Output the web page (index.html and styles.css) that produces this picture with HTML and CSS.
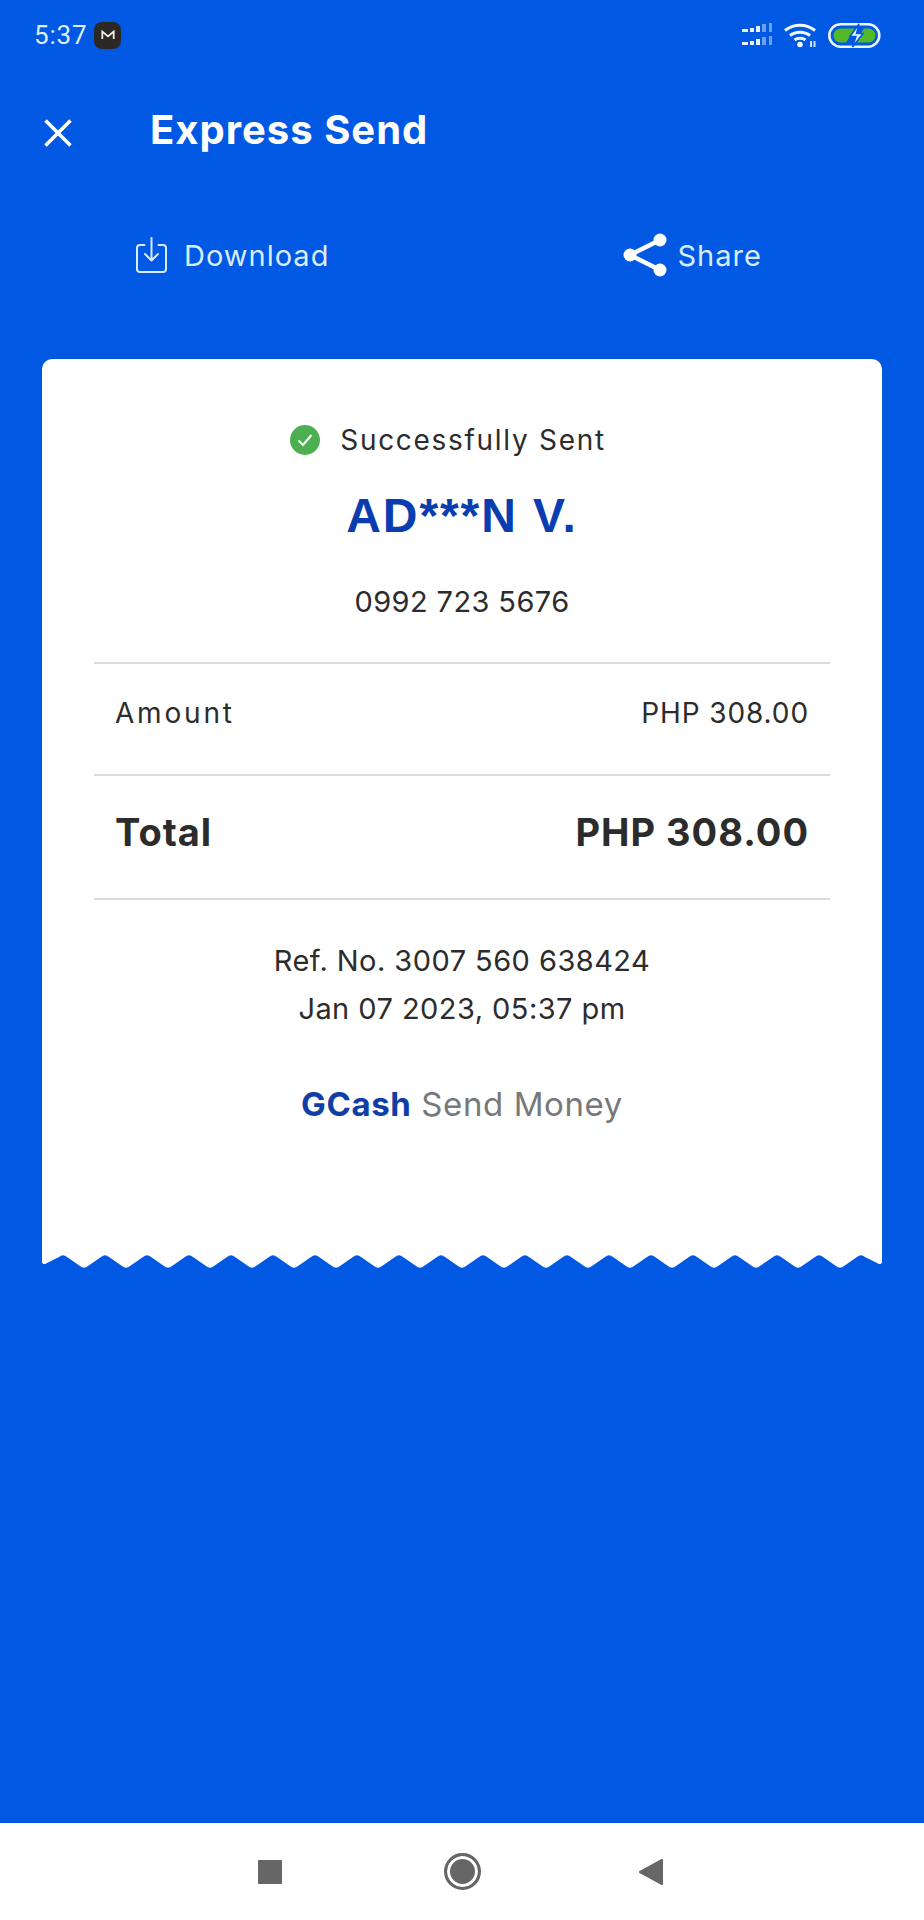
FILE: index.html
```html
<!DOCTYPE html>
<html lang="en">
<head>
    <meta charset="UTF-8">
    <meta name="viewport" content="width=device-width, initial-scale=1.0">
    <title>Express Send</title>
    <link rel="stylesheet" href="styles.css">
</head>
<body>
    <div class="screen">
        <div class="statusbar">
            <div class="status-left">
                <span class="time">5:37</span>
                <span class="mail-badge">
                    <svg width="14" height="10" viewBox="0 0 16 11"><path d="M1.500 10V1.500L8 7l6.500-5.500V10" fill="none" stroke="#f5f0e6" stroke-width="2"/></svg>
                </span>
            </div>
            <div class="status-right">
                <svg class="sig" width="31" height="24" viewBox="0 0 31 24">
                    <g fill="#e8f3ff">
                        <rect x="0" y="6" width="6" height="3"/><rect x="8" y="5" width="4" height="4"/><rect x="14" y="3" width="4" height="6"/>
                        <rect x="0" y="19" width="6" height="3"/><rect x="8" y="18" width="4" height="4"/><rect x="14" y="16" width="4" height="6"/>
                    </g>
                    <g fill="#6f9ff0">
                        <rect x="20" y="1" width="4" height="8"/><rect x="27" y="0" width="3" height="9"/>
                        <rect x="20" y="14" width="4" height="8"/><rect x="27" y="13" width="3" height="9"/>
                    </g>
                </svg>
                <svg class="wifi" width="33" height="25" viewBox="0 0 33 25">
                    <g fill="none" stroke="#f2f8ff" stroke-width="3">
                        <path d="M1 7.500C9.500 .5 22.500 .5 31 7.500"/>
                        <path d="M6 12.500C11.500 8 20.500 8 26 12.500"/>
                        <path d="M10.500 17C13.500 14.800 18.500 14.800 21.500 17"/>
                    </g>
                    <circle cx="16" cy="21.500" r="2.800" fill="#f2f8ff"/>
                    <path d="M27 18v6M30.500 18v6" stroke="#cfe2ff" stroke-width="2"/>
                </svg>
                <svg class="battery" width="53" height="25" viewBox="0 0 53 25">
                    <rect x="1.300" y="1.300" width="50" height="22.400" rx="11.200" fill="none" stroke="#eef7ff" stroke-width="2.600"/>
                    <path d="M5.500 12.500a7 7 0 0 1 7-7h14.500l-9 14h-5.500a7 7 0 0 1-7-7z" fill="#52b82a"/>
                    <path d="M47.500 12.500a7 7 0 0 1-7 7H27l9-14h4.500a7 7 0 0 1 7 7z" fill="#52b82a"/>
                    <path d="M31 1l-9 12.500h6l-3.500 10.500 10.500-13.500h-6.500z" fill="#f4faff" stroke="#0058e3" stroke-width="1.500"/>
                </svg>
            </div>
        </div>

        <header class="topbar">
            <svg class="close" width="32" height="32" viewBox="0 0 32 32"><path d="M3.500 3.500l25 25M28.500 3.500l-25 25" stroke="#fff" stroke-width="3.600" fill="none"/></svg>
            <h1>Express Send</h1>
        </header>

        <div class="actions">
            <div class="action action-download">
                <svg width="31" height="36" viewBox="0 0 31 36">
                    <g fill="none" stroke="#d8ecff" stroke-width="2" stroke-linecap="round" stroke-linejoin="round">
                        <path d="M8.500 8H4a3 3 0 0 0-3 3v21a3 3 0 0 0 3 3h23a3 3 0 0 0 3-3V11a3 3 0 0 0-3-3h-4.500"/>
                        <path d="M15.500 1v22M9 17l6.500 6.500L22 17"/>
                    </g>
                </svg>
                <span>Download</span>
            </div>
            <div class="action action-share">
                <svg width="44" height="44" viewBox="0 0 44 44">
                    <path d="M37 7L7 22l30 15" fill="none" stroke="#fff" stroke-width="4.500"/>
                    <circle cx="37" cy="7" r="6.500" fill="#fff"/>
                    <circle cx="7" cy="22" r="6.500" fill="#fff"/>
                    <circle cx="37" cy="37" r="6.500" fill="#fff"/>
                </svg>
                <span>Share</span>
            </div>
        </div>

        <main class="receipt">
            <div class="receipt-body">
                <div class="sent">
                    <svg width="30" height="30" viewBox="0 0 30 30">
                        <circle cx="15" cy="15" r="15" fill="#4caf50"/>
                        <path d="M8.500 15.500l4.500 4.500 8.500-10" fill="none" stroke="#fff" stroke-width="2"/>
                    </svg>
                    <span>Successfully Sent</span>
                </div>
                <div class="name">AD***N V.</div>
                <div class="phone">0992 723 5676</div>

                <div class="row row-amount">
                    <span class="row-label">Amount</span>
                    <span>PHP 308.00</span>
                </div>
                <div class="row row-total">
                    <span>Total</span>
                    <span>PHP 308.00</span>
                </div>

                <div class="meta">
                    <div>Ref. No. 3007 560 638424</div>
                    <div>Jan 07 2023, 05:37 pm</div>
                </div>
                <div class="brand"><b>GCash</b> Send Money</div>
            </div>
            <svg class="tear" width="840" height="20" viewBox="0 0 840 20">
                <path fill="#fff" d="M0 0V11Q0 13 3 13L17 6
                    q4-3.500 8 0l13 9q4 3.500 8 0l13-9
                    q4-3.500 8 0l13 9q4 3.500 8 0l13-9
                    q4-3.500 8 0l13 9q4 3.500 8 0l13-9
                    q4-3.500 8 0l13 9q4 3.500 8 0l13-9
                    q4-3.500 8 0l13 9q4 3.500 8 0l13-9
                    q4-3.500 8 0l13 9q4 3.500 8 0l13-9
                    q4-3.500 8 0l13 9q4 3.500 8 0l13-9
                    q4-3.500 8 0l13 9q4 3.500 8 0l13-9
                    q4-3.500 8 0l13 9q4 3.500 8 0l13-9
                    q4-3.500 8 0l13 9q4 3.500 8 0l13-9
                    q4-3.500 8 0l13 9q4 3.500 8 0l13-9
                    q4-3.500 8 0l13 9q4 3.500 8 0l13-9
                    q4-3.500 8 0l13 9q4 3.500 8 0l13-9
                    q4-3.500 8 0l13 9q4 3.500 8 0l13-9
                    q4-3.500 8 0l13 9q4 3.500 8 0l13-9
                    q4-3.500 8 0l13 9q4 3.500 8 0l13-9
                    q4-3.500 8 0l13 9q4 3.500 8 0l13-9
                    q4-3.500 8 0l13 9q4 3.500 8 0l13-9
                    q4-3.500 8 0l13 9q4 3.500 8 0l13-9
                    q4-3.500 8 0L837 13Q840 13 840 11V0Z"/>
            </svg>
        </main>

        <div class="spacer"></div>

        <nav class="navbar">
            <span class="nav-square"></span>
            <span class="nav-home"></span>
            <svg width="25" height="28" viewBox="0 0 25 28"><path d="M24 2v24L2 14z" fill="#666" stroke="#666" stroke-width="2" stroke-linejoin="round"/></svg>
        </nav>
    </div>
</body>
</html>
```

FILE: styles.css
```css
/* General Styling */
* {
    box-sizing: border-box;
}

body {
    margin: 0;
    background: #0058e3;
    font-family: 'Inter', sans-serif;
    color: #2c2c2c;
}

.screen {
    display: flex;
    flex-direction: column;
    height: 1920px;
}

/* Status Bar */
.statusbar {
    display: flex;
    justify-content: space-between;
    align-items: center;
    height: 70px;
    padding: 0 43px 0 34px;
}

.status-left, .status-right {
    display: flex;
    align-items: center;
}

.status-right {
    gap: 11px;
}

.time {
    font-family: 'Roboto', sans-serif;
    font-size: 26px;
    color: #dcefff;
    letter-spacing: 0.8px;
}

.mail-badge {
    display: flex;
    align-items: center;
    justify-content: center;
    width: 27px;
    height: 27px;
    margin-left: 7px;
    border-radius: 8px;
    background: #2b2826;
}

/* Header */
.topbar {
    display: flex;
    align-items: center;
    height: 72px;
    margin-top: 23px;
    padding-left: 42px;
}

.close {
    margin-top: 8px;
}

.topbar h1 {
    margin: 0 0 0 76px;
    font-size: 40px;
    font-weight: 700;
    letter-spacing: 1px;
    color: #fff;
}

.actions {
    display: flex;
    height: 60px;
    margin-top: 60px;
    align-items: center;
}

.action {
    display: flex;
    align-items: center;
    font-size: 29px;
    color: #d8ecff;
    letter-spacing: 1px;
}

.action-download {
    gap: 17px;
    margin-left: 136px;
}

.action-share {
    gap: 10px;
    margin-left: 294px;
}

/* Receipt */
.receipt {
    margin: 74px 42px 0;
}

.tear {
    display: block;
}

.receipt-body {
    display: flex;
    flex-direction: column;
    height: 892px;
    padding: 66px 52px 0;
    background: #fff;
    border-radius: 10px 10px 0 0;
}

.sent {
    display: flex;
    justify-content: center;
    align-items: center;
    gap: 20px;
    height: 30px;
    padding-right: 28px;
    font-size: 28px;
    letter-spacing: 1.7px;
}

.name {
    margin-top: 34px;
    text-align: center;
    font-family: 'Liberation Sans', sans-serif;
    font-size: 48px;
    font-weight: 700;
    line-height: 54px;
    letter-spacing: 1.9px;
    color: #0a3db0;
}

.phone {
    margin-top: 41px;
    text-align: center;
    font-size: 29px;
    line-height: 36px;
    letter-spacing: 0.4px;
}

.row {
    display: flex;
    justify-content: space-between;
    align-items: center;
    padding: 0 21px;
    border-top: 2px solid #dcdcdc;
}

.row-amount {
    height: 112px;
    margin-top: 42px;
    padding-bottom: 12px;
    font-size: 28px;
    letter-spacing: 0.9px;
}

.row-amount .row-label {
    letter-spacing: 2.800px;
}

.row-total {
    height: 126px;
    padding-bottom: 10px;
    font-size: 38px;
    font-weight: 700;
    letter-spacing: 1px;
    border-bottom: 2px solid #dcdcdc;
}

.meta {
    margin-top: 37px;
    text-align: center;
    font-size: 29px;
    line-height: 48px;
    letter-spacing: 0.45px;
}

.brand {
    margin-top: 51px;
    text-align: center;
    font-size: 33px;
    letter-spacing: 0.6px;
    color: #77787a;
}

.brand b {
    color: #0f3fa6;
}

.spacer {
    flex: 1;
}

/* Nav Bar */
.navbar {
    display: flex;
    align-items: center;
    height: 97px;
    padding-left: 258px;
    background: #fff;
}

.nav-square {
    width: 24px;
    height: 24px;
    margin-right: 162px;
    border-radius: 1px;
    background: #666;
}

.nav-home {
    width: 37px;
    height: 37px;
    margin-right: 157px;
    border: 3px solid #666;
    border-radius: 50%;
    background: #666;
    box-shadow: inset 0 0 0 3px #fff;
}
```
